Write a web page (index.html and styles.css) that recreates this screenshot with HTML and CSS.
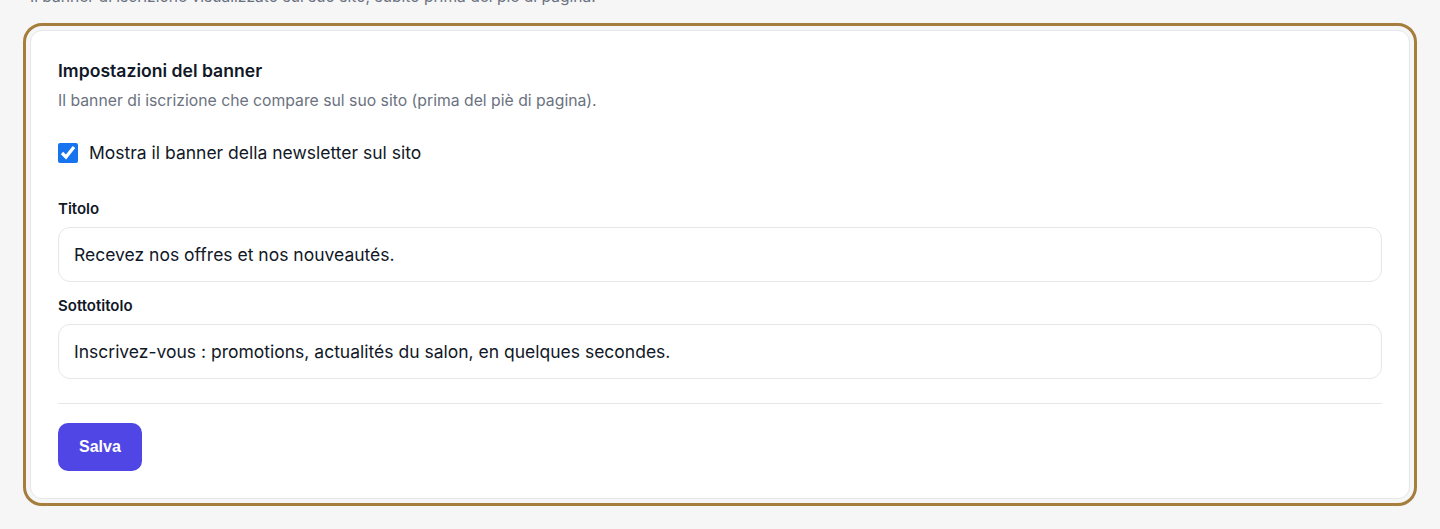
FILE: index.html
```html
<!DOCTYPE html>
<html lang="it">
<head>
<meta charset="utf-8">
<title>Impostazioni del banner</title>
<link rel="stylesheet" href="styles.css">
</head>
<body>
<div class="page">
  <p class="intro">Il banner di iscrizione visualizzato sul suo sito, subito prima del piè di pagina.</p>
  <section class="card">
    <h2 class="card-title">Impostazioni del banner</h2>
    <p class="card-desc">Il banner di iscrizione che compare sul suo sito (prima del piè di pagina).</p>
    <label class="check-row">
      <input type="checkbox" class="check" checked>
      <span>Mostra il banner della newsletter sul sito</span>
    </label>
    <div class="field field-first">
      <label class="field-label" for="titolo">Titolo</label>
      <input id="titolo" class="text-input" type="text" value="Recevez nos offres et nos nouveautés.">
    </div>
    <div class="field">
      <label class="field-label" for="sottotitolo">Sottotitolo</label>
      <input id="sottotitolo" class="text-input" type="text" value="Inscrivez-vous : promotions, actualités du salon, en quelques secondes.">
    </div>
    <hr class="divider">
    <button class="btn-save" type="button">Salva</button>
  </section>
</div>
</body>
</html>
```

FILE: styles.css
```css
* { box-sizing: border-box; }
html, body { margin: 0; padding: 0; }
body {
  background: #f6f6f7;
  font-family: Inter, "Noto Sans", sans-serif;
  color: #111827;
  height: 529px;
  overflow: hidden;
}
.page {
  padding: 0 30px;
  margin-top: -13px;
}
.intro {
  margin: 0 0 23px 0;
  font-size: 15.6px;
  line-height: 20px;
  color: #6b7280;
}
.card {
  background: #fff;
  border: 1px solid #e5e7eb;
  border-radius: 12px;
  outline: 3px solid #a57d3c;
  outline-offset: 4px;
  padding: 28px 27px 27px;
  display: flex;
  flex-direction: column;
  align-items: stretch;
}
.card-title {
  margin: 0;
  font-size: 17.6px;
  line-height: 24px;
  font-weight: 600;
  color: #111827;
}
.card-desc {
  margin: 8px 0 0 0;
  font-size: 15.75px;
  line-height: 20px;
  color: #6b7280;
}
.check-row {
  margin-top: 30px;
  display: flex;
  align-items: center;
  gap: 11px;
  font-size: 17.5px;
  line-height: 24px;
  color: #111827;
}
.check {
  width: 20px;
  height: 20px;
  margin: 0;
  accent-color: #1774ee;
}
.field {
  display: flex;
  flex-direction: column;
  gap: 8px;
  margin-top: 14px;
}
.field-first { margin-top: 34px; }
.field-label {
  font-size: 15px;
  line-height: 20px;
  font-weight: 600;
  color: #111827;
}
.text-input {
  height: 55px;
  border: 1px solid #e5e7eb;
  border-radius: 12px;
  padding: 0 15px;
  font-family: Inter, "Noto Sans", sans-serif;
  font-size: 17.5px;
  color: #111827;
  background: #fff;
}
.divider {
  margin: 24px 0 0 0;
  border: 0;
  border-top: 1px solid #e5e7eb;
  height: 0;
}
.btn-save {
  margin-top: 19px;
  align-self: flex-start;
  height: 48px;
  padding: 0 21px;
  border: 0;
  border-radius: 10px;
  background: #4f46e5;
  color: #fff;
  font-family: "Liberation Sans", Arial, sans-serif;
  font-weight: 700;
  font-size: 16px;
}
```
